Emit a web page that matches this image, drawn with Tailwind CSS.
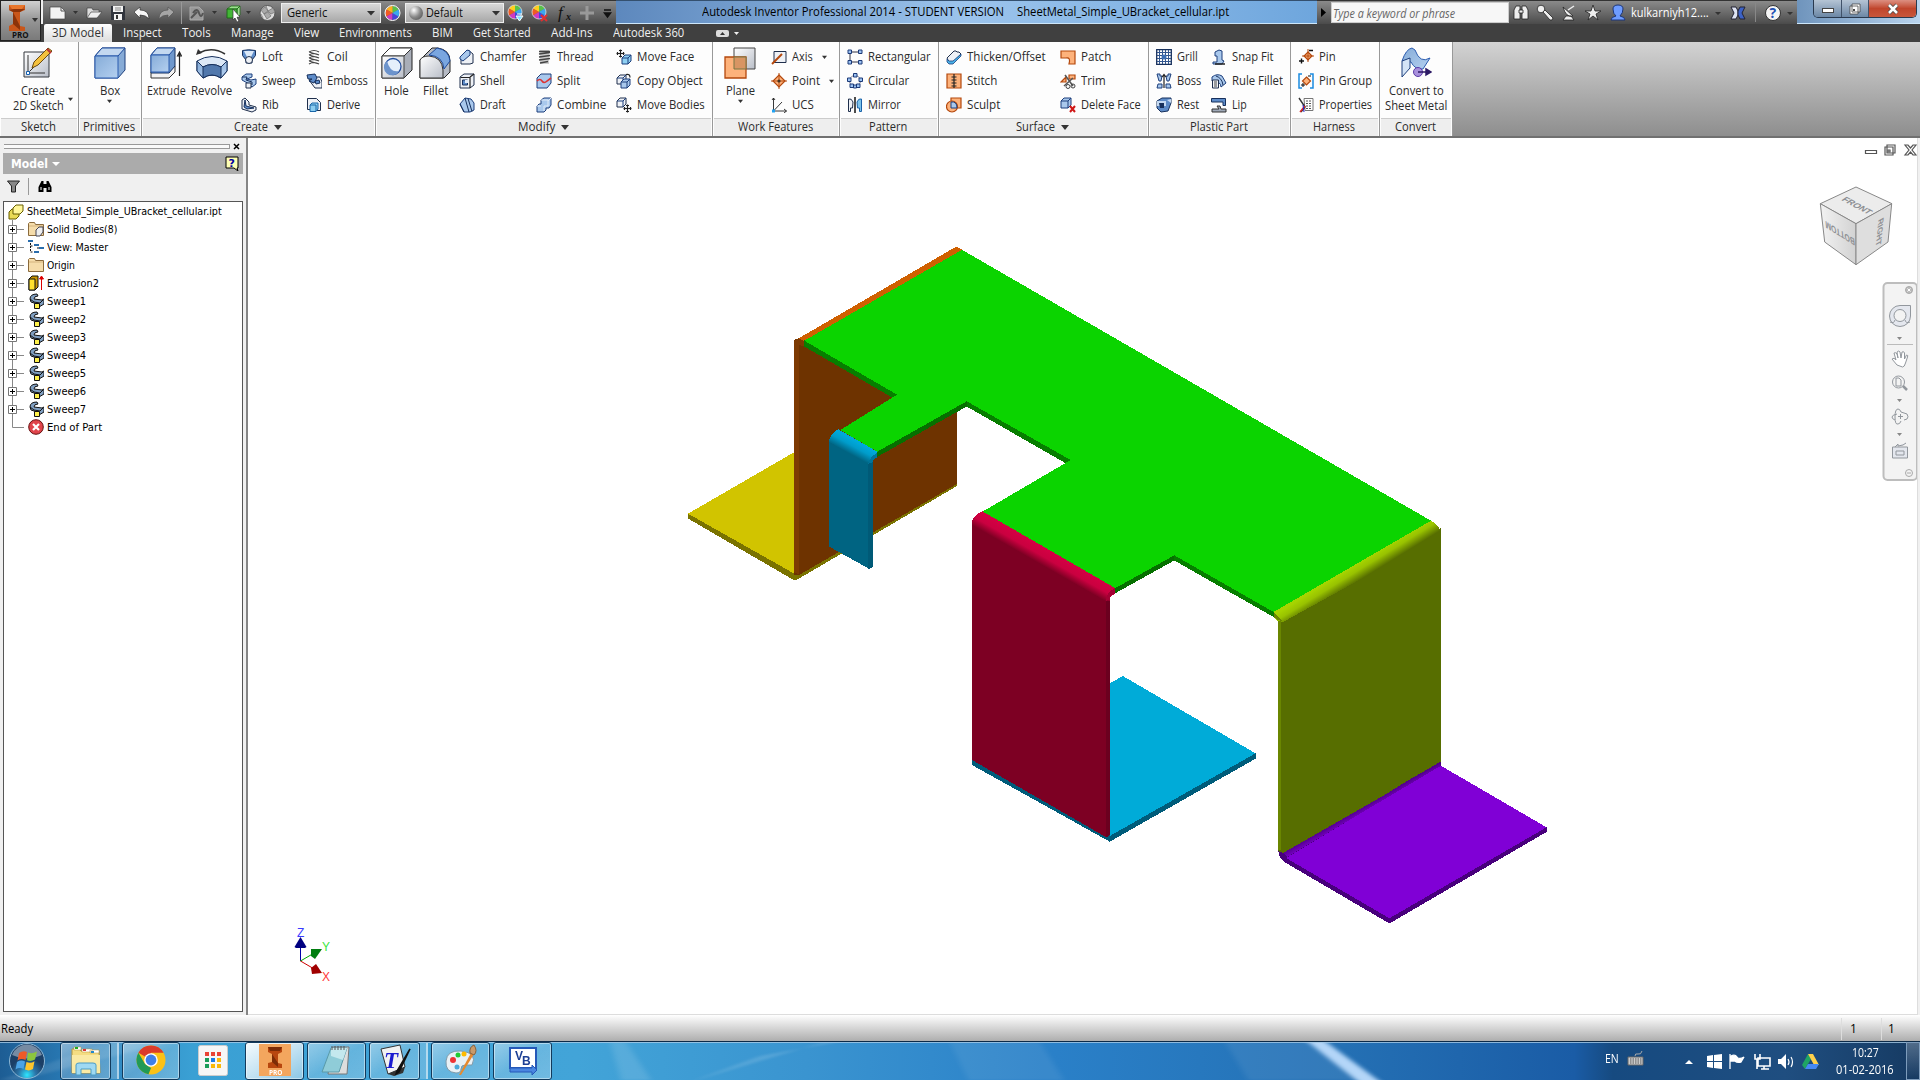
<!DOCTYPE html>
<html lang="en">
<head>
<meta charset="utf-8">
<title>Autodesk Inventor Professional 2014</title>
<script src="https://cdn.jsdelivr.net/npm/@tailwindcss/browser@4"></script>
</head>
<body class="w-[1920px] h-[1080px] overflow-hidden bg-[#f0f0f0] flex flex-col font-['Open_Sans','Noto_Sans',sans-serif] text-[12px] text-[#2b2b2b] leading-none">

<!-- Title bar and tabs -->
<header class="relative flex flex-col h-[42px] shrink-0">
  <div class="flex h-6 shrink-0">
    <div class="w-[43px] shrink-0"></div>
    <div class="flex items-center h-6 w-[573px] shrink-0 bg-linear-to-b from-[#8a8a8a] via-[#6b6b6b] to-[#4b4b4b] border-t border-[#333] pl-[5px]">
      <svg class="w-[240px] h-6 shrink-0" viewBox="48 0 240 24">
        <path d="M50 6h11l4 4v8H50z" fill="#f3f3f3" stroke="#444" stroke-width=".7"/><path d="M61 6v4h4" fill="none" stroke="#555"/>
        <path d="M73 10h5l-2.500 3zM212 10h5l-2.500 3zM246 10h5l-2.500 3z" fill="#333"/>
        <path d="M87 17V7h5l1 2h6v2" fill="#ddd" stroke="#444" stroke-width=".7"/><path d="M87 17l4-6h11l-5 6z" fill="#eee" stroke="#444" stroke-width=".7"/>
        <path d="M111 5h14v14h-14z" fill="#30343c"/><path d="M113 5h10v6h-10zM114 13h8v6h-8z" fill="#f2f2f2"/><path d="M115 7h6M115 9h6" stroke="#888"/><path d="M116 14h2v4h-2z" fill="#333"/>
        <path d="M134 11l6-5v3q9 0 9 9q-3-4-9-4v3z" fill="#f7f7f7" stroke="#333" stroke-width=".7"/>
        <path d="M174 11l-6-5v3q-9 0-9 9q3-4 9-4v3z" fill="#a5a5a5" stroke="#555" stroke-width=".7"/>
        <path d="M181.500 1v22" stroke="#999"/>
        <path d="M190 6h9l4 4v9h-13z" fill="#999" stroke="#aaa"/><path d="M193 12q4-6 6 0t4 0M191 17l6-6" stroke="#555" stroke-width="2" fill="none"/>
        <path d="M227 8l4-3h9l-3 3zM240 5v9l-3 3V8z" fill="#9be08e" stroke="#1f6a18" stroke-width=".8"/><path d="M227 8h10v9h-10z" fill="#43b636" stroke="#1f6a18"/><path d="M233 8l7 8-3 .3 2 4-2 .7-2-4-2 2z" fill="#fff" stroke="#333" stroke-width=".7"/>
        <circle cx="267.500" cy="12" r="7.500" fill="#ddd" stroke="#555"/><path d="M261 9l4-3 3 4-4 3zM268 10l5-3 2 4-4 2zM264 13l4-2 3 4-4 3zM261 13l2 4M266 5l2 5" fill="#aaa" stroke="#777" stroke-width=".8"/>
      </svg>
      <div class="flex items-center justify-between w-[100px] shrink-0 h-5 ml-[-7px] bg-linear-to-b from-[#d8d8d8] to-[#a8a8a8] border border-[#eee] px-[5px] text-[#111]"><span data-w="40">Generic</span><svg class="w-2 h-2" viewBox="0 0 8 8"><path d="M0 2h8L4 6.500z" fill="#333"/></svg></div>
      <svg class="w-[22px] h-5 shrink-0" viewBox="0 0 22 20"><g transform="translate(11.500 10)"><path d="M0 0V-7A7 7 0 0 1 6 -3.500z" fill="#58c14b"/><path d="M0 0V-7A7 7 0 0 0-6-3.500z" fill="#ffb01e"/><path d="M0 0L-6-3.500A7 7 0 0 0-6 3.500z" fill="#f25a22"/><path d="M0 0L-6 3.500A7 7 0 0 0 0 7z" fill="#d03ac0"/><path d="M0 0V7A7 7 0 0 0 6 3.500z" fill="#4444dc"/><path d="M0 0L6 3.500A7 7 0 0 0 6-3.500z" fill="#3ba7f0"/><circle r="7.500" fill="none" stroke="#fff"/></g></svg>
      <div class="flex items-center w-[99px] shrink-0 h-5 ml-[2px] bg-linear-to-b from-[#d8d8d8] to-[#a8a8a8] border border-[#eee] px-[3px] text-[#111]"><i class="w-[14px] h-[14px] rounded-full bg-radial-[at_35%_30%] from-white via-[#888] to-[#444]"></i><span class="ml-[3px]" data-w="37">Default</span><svg class="w-2 h-2 ml-auto" viewBox="0 0 8 8"><path d="M0 2h8L4 6.500z" fill="#333"/></svg></div>
      <svg class="w-[110px] h-6 shrink-0" viewBox="504 0 110 24">
        <g id="wheel"><path d="M515 11V4a7 7 0 0 1 6 3.500z" fill="#58c14b"/><path d="M515 11V4a7 7 0 0 0-6 3.500z" fill="#ffd01e"/><path d="M515 11l-6-3.500a7 7 0 0 0 0 7z" fill="#f25a22"/><path d="M515 11l-6 3.500a7 7 0 0 0 6 3.500z" fill="#d03ac0"/><path d="M515 11v7a7 7 0 0 0 6-3.500z" fill="#4444dc"/><path d="M515 11l6 3.500a7 7 0 0 0 0-7z" fill="#3ba7f0"/><circle cx="515" cy="11" r="7" fill="none" stroke="#ddd" stroke-width=".8"/></g>
        <use href="#wheel" x="24"/>
        <path d="M516 15h7l-3.500 5zM517 13h5" fill="#7fe0ff" stroke="#fff"/><path d="M541 14l6 6M547 14l-6 6" stroke="#e03030" stroke-width="2"/>
        <text x="558" y="17" font-size="17" font-style="italic" font-family="Liberation Serif, serif" fill="#111">f</text><text x="566" y="19" font-size="10" font-weight="bold" font-style="italic" font-family="Liberation Serif, serif" fill="#111">x</text>
        <path d="M587 5v14M580 12h14" stroke="#999" stroke-width="3"/><path d="M604 9h7M604.500 12h6l-3 4z" stroke="#111" stroke-width="1.500" fill="#111"/>
      </svg>
    </div>
    <div class="flex items-center h-6 w-[701px] shrink-0 bg-linear-to-r from-[#5d88bd] via-[#9cc4ec] to-[#6ea6dd] border-t border-b border-t-[#34506f] border-b-[#cde7fb] text-black whitespace-pre">
      <span class="ml-[86px]" data-w="302">Autodesk Inventor Professional 2014 - STUDENT VERSION</span><span class="ml-[13px]" data-w="212">SheetMetal_Simple_UBracket_cellular.ipt</span>
    </div>
    <div class="flex items-center h-6 w-[480px] shrink-0 bg-linear-to-b from-[#8a8a8a] via-[#6b6b6b] to-[#4b4b4b] border-t border-[#333]">
      <svg class="w-[14px] h-6 shrink-0" viewBox="0 0 14 24"><path d="M4 7l5 4.500-5 4.500z" fill="#000"/></svg>
      <div class="flex items-center w-[178px] shrink-0 h-[21px] bg-[#f7f7f7] border border-[#ccc] pl-px pt-[3px] italic text-[#666]"><span data-w="122">Type a keyword or phrase</span></div>
      <svg class="w-[122px] h-6 shrink-0" viewBox="1509 0 122 24">
        <g fill="#eee" stroke="#222" stroke-width=".8"><path d="M1514 18V9l2-4h4v13zM1522 18V5h4l2 4v9z"/><path d="M1519 9h4v3h-4z"/><circle cx="1541" cy="8" r="3.800"/><path d="M1543 11l2-2 8 8-1 2h-2z"/><path d="M1563 19h11l-3-4h-5zM1563 6l10 9q-7 2-10-9z"/><path d="M1568 9l6-4" stroke="#eee" stroke-width="1.500"/><path d="M1593 4l2 6h6l-5 3 2 6-5-4-5 4 2-6-5-3h6z"/></g>
        <path d="M1613 8q0-4 5-4t5 4-3 7q5 1 5 4h-14q0-3 5-4-3-2-3-7z" fill="#6e9cff" stroke="#1b357a"/>
      </svg>
      <span class="text-white pt-px" data-w="78">kulkarniyh12....</span>
      <svg class="w-[88px] h-6 shrink-0" viewBox="1709 0 88 24"><path d="M1715 11h6l-3 3zM1787 11h6l-3 3z" fill="#333"/><path d="M1731 6h5l2 4v4l-2 4h-5l3-6z" fill="#dfe4f3" stroke="#223"/><path d="M1745 6h-5l-2 4v4l2 4h5l-3-6z" fill="#3c62c6" stroke="#223"/><path d="M1755.500 2v19" stroke="#888"/><circle cx="1773" cy="12" r="7.500" fill="#f5f5f5" stroke="#333"/><text x="1769.500" y="17" font-size="14" font-weight="bold" font-family="Open Sans, sans-serif" fill="#1f51b4">?</text></svg>
    </div>
    <div class="relative flex h-6 w-[123px] shrink-0 bg-linear-to-r from-[#6f94bc] to-[#b9d4ee] border-b border-[#cde7fb] pl-4">
      <div class="flex h-[18px] w-[104px] rounded-b-[5px] border border-t-0 border-[#2a3a4f] overflow-hidden">
        <div class="flex w-7 shrink-0 items-center justify-center bg-linear-to-b from-[#b5c4d4] to-[#6c88a6] border-r border-[#405269]"><i class="w-3 h-[5px] mt-1 bg-white border border-[#444]"></i></div>
        <div class="flex w-[27px] shrink-0 items-center justify-center bg-linear-to-b from-[#b5c4d4] to-[#6c88a6] border-r border-[#405269]"><svg class="w-3 h-3" viewBox="0 0 12 12"><path d="M3 1h8v8H3zM1 3h8v8H1z" fill="#fff" stroke="#444" stroke-width=".8"/><path d="M4 6h2v2H4z" fill="#444"/></svg></div>
        <div class="flex w-[47px] shrink-0 items-center justify-center bg-linear-to-b from-[#dc8f81] via-[#c0452c] to-[#c8573c]"><svg class="w-3 h-3" viewBox="0 0 12 12"><path d="M2 2l8 8M10 2l-8 8" stroke="#444" stroke-width="4"/><path d="M2 2l8 8M10 2l-8 8" stroke="#fff" stroke-width="2.600"/></svg></div>
      </div>
    </div>
  </div>
  <nav class="flex h-[18px] bg-[#404040] text-[#f0f0f0] pl-11" id="tabs"></nav>
  <div class="absolute left-0 top-0 w-[41px] h-[41px] bg-linear-to-b from-[#d0d0d0] via-[#959595] to-[#7a7a7a] border border-[#222]">
    <svg class="w-full h-full" viewBox="1 1 39 39"><path d="M9 5h16v5l-5 2v14l5 1v4H9v-5l4-2V12L9 10z" fill="#c9561a"/><path d="M9 10l5-1h11l-5 3h-7zM13 12l7 14v4l-7-6z" fill="#8c3309"/><path d="M9 5h16l-3 4H12z" fill="#e8762c"/><path d="M32 18h6l-3 4z" fill="#333"/><text x="12" y="38" font-size="8" font-weight="bold" font-family="Open Sans, sans-serif" fill="#111">PRO</text></svg>
  </div>
</header>

<!-- Ribbon -->
<section class="flex h-[96px] shrink-0 bg-linear-to-b from-[#d3d3d3] to-[#8e8e8e] border-b-2 border-[#707070]" id="ribbon"></section>

<!-- Browser panel and canvas -->
<main class="flex h-[877px] shrink-0">
  <aside class="flex flex-col w-[248px] border-r-2 border-[#858585] pl-[3px] pr-[3px] pt-[3px] font-['DejaVu_Sans_Condensed','DejaVu_Sans',sans-serif] text-[11px] text-black">
    <div class="flex items-center h-[11px] justify-between pr-[3px]"><div class="w-[226px] h-[5px] border-t border-b border-r border-[#999] ml-px bg-[#fafafa]"></div><svg class="w-[7px] h-[7px]" viewBox="0 0 7 7"><path d="M1 1l5 5M6 1L1 6" stroke="#000" stroke-width="1.500"/></svg></div>
    <div class="flex items-center h-[21px] w-[240px] bg-[#ababab] mt-px px-2 text-white font-bold text-[12px]"><span data-w="37">Model</span><svg class="w-2 h-2 ml-1" viewBox="0 0 8 8"><path d="M0 2h8L4 6z" fill="#fff"/></svg>
      <svg class="w-[14px] h-[15px] ml-auto -mr-1" viewBox="0 0 14 15"><path d="M1 1h12v11h-1l1 3-4-3H1z" fill="#ffffb5" stroke="#000"/><text x="3.500" y="11" font-size="11" font-weight="bold" font-family="DejaVu Sans, sans-serif" fill="#0000a0">?</text></svg></div>
    <div class="flex items-center h-[23px] pl-1"><svg class="w-[50px] h-5" viewBox="0 0 50 20"><path d="M.5 5h12L8.500 10v6h-4v-6z" fill="#888" stroke="#222"/><path d="M21.500 2v17" stroke="#999"/><path d="M31.500 16V11l3-6h2v3h3V5h2l3 6v5h-5v-4h-3v4z" fill="#000"/><path d="M34 11v3M42 11v3" stroke="#fff"/></svg></div>
    <ul class="flex flex-col h-[811px] w-[240px] bg-white border border-[#555] mt-1" id="tree"></ul>
  </aside>
  <div class="relative w-[1670px] bg-white border-r border-b border-[#ddd]">
    <svg class="block w-[1669px] h-[876px]" viewBox="248 138 1669 876">
      <defs>
        <linearGradient id="gb" gradientUnits="userSpaceOnUse" x1="853" y1="440" x2="846.500" y2="452"><stop offset="0" stop-color="#00a8da"/><stop offset=".4" stop-color="#009cca"/><stop offset="1" stop-color="#006482"/></linearGradient>
        <linearGradient id="gr" gradientUnits="userSpaceOnUse" x1="1048" y1="550" x2="1040" y2="564"><stop offset="0" stop-color="#d40043"/><stop offset=".5" stop-color="#ca0040"/><stop offset="1" stop-color="#7d0023"/></linearGradient>
        <linearGradient id="gl" gradientUnits="userSpaceOnUse" x1="1352" y1="567" x2="1360" y2="580"><stop offset="0" stop-color="#a6d400"/><stop offset=".4" stop-color="#98c200"/><stop offset="1" stop-color="#576e00"/></linearGradient>
        <linearGradient id="gp" gradientUnits="userSpaceOnUse" x1="1360" y1="806" x2="1364" y2="813"><stop offset="0" stop-color="#46007a"/><stop offset="1" stop-color="#7400c0"/></linearGradient>
        <linearGradient id="gc" x1="0" y1="0" x2="1" y2="0"><stop offset="0" stop-color="#f2f2f2"/><stop offset="1" stop-color="#d2d2d2"/></linearGradient>
      </defs>
      <g shape-rendering="crispEdges">
        <path d="M688 513.700L794 452.300V580L688 518z" fill="#d1c400"/><path d="M688 513.700L794 573.500 957 480v6L797 579.700h-4L688 518.500z" fill="#7a7300"/>
        <path d="M797 339L957 390v94L799 575h-5V341z" fill="#6e3300"/><path d="M794 340l5-2 6 2.700-.5 6-5.500-2v230l-5-2.500z" fill="#7d3a02"/>
        <path d="M798.700 338.300L955 247.300h3l5 3L804.300 341z" fill="#cf6000"/>
        <path d="M804.300 340V346.500L893 398l4-4zM966.700 401V406.500L1066 463.500l5-4zM1174.300 555V560.500L1273.500 617v-6z" fill="#077e00"/><path d="M877 451V457L966.700 406.500V400zM1114 588V594L1174.300 560.500V554z" fill="#067000"/>
        <path d="M962 249.800L1431 520.700 1273.500 612 1174.300 555.300 1115 588.300 982.400 511.700 1070.700 460 966.700 401.300 877.300 451.700 840.300 430 897 394.700 804.300 340.700z" fill="#0bd400"/>
        <path d="M829.300 440L868 462l5-4v109l-4 1.700L829.300 546.700z" fill="#006482"/><path d="M868.300 463L873 458V566.500l-3 2h-1.700z" fill="#005a77"/>
        <path d="M829.300 440q2-7 9-10.700L877.300 451.700V458q-3-1-5 2.500l-4 4L829.300 442z" fill="url(#gb)"/><path d="M868.300 464q1-7 9-11v5q-4 0-4.300 4z" fill="#00749a"/>
        <path d="M1109.800 683.300L1122.900 676 1255.500 753.300V758.700L1109.800 841.700 972 765v-6z" fill="#005c7a"/><path d="M1109.800 683.300L1122.900 676 1255.500 753.300 1109.800 836z" fill="#00abd8"/>
        <path d="M972 523L1105.300 596l4.500 2V834l-4 3L972 760z" fill="#7d0023"/><path d="M1105.500 600l4.500-4v238l-3 3h-1.500z" fill="#6b001f"/>
        <path d="M972 525v-4q3-7 10.400-9.700L1115 588v6q-5 1-5.500 7h-4z" fill="url(#gr)"/><path d="M1105.500 601q1-9 9.500-13v5.500q-5 1-5 6z" fill="#a30033"/>
        <path d="M1278 850l5 2L1390 786l50.500-25v5L1546.500 827.300V832L1389.400 923.500 1286 863q-7-4-8-13z" fill="#48007c"/><path d="M1440.500 765.500L1546.500 827.300 1389.400 918.300 1286 858z" fill="#8000d6"/><path d="M1283 852L1440.400 761V766L1287 857z" fill="url(#gp)"/>
        <path d="M1278 619L1440.900 528V761.500L1402 784l-14 9-105 60-5-2z" fill="#576e00"/><path d="M1431 520.700q9 4 9.900 14.300L1283 622l-5-1-4.500-4v-5z" fill="url(#gl)"/><path d="M1273.500 612l9 9-4.500-1-4.500-3zM1278 621h2.500v229H1278z" fill="#6a8600"/>
      </g>
      <!-- Axis triad -->
      <path d="M300.500 961V945" stroke="#00a" stroke-width="1"/><path d="M300.500 937l6 10-1.500 1h-9l-1.500-1z" fill="#000080"/>
      <path d="M300.500 961l12-7" stroke="#0a0" stroke-width="1"/><path d="M311 949l11 0-7 10-4-3z" fill="#007d10"/><path d="M300.500 961l12 7" stroke="#c00" stroke-width="1"/><path d="M311 968l5-4 6 9-10 1z" fill="#a00000"/>
      <g font-family="Liberation Sans, sans-serif" font-size="12"><text x="297" y="937" fill="#3a3aff">Z</text><text x="322" y="951" fill="#3ce63c">Y</text><text x="322" y="981" fill="#ff3a3a">X</text></g>
      <!-- Document window buttons -->
      <g fill="#fff" stroke="#555" stroke-width="1.200"><path d="M1865.500 150.500h11v3h-11z"/><path d="M1887 145h8v8h-8zM1885 147h8v8h-8z"/><path d="M1888 150h2v2h-2z"/><path d="M1905 145h3l2.500 3 2.500-3h3l-4 5 4 5h-3l-2.500-3-2.500 3h-3l4-5z"/></g>
      <!-- View cube -->
      <g stroke="#888" stroke-width="1"><path d="M1856 187l36 16.700-36 20-35.700-20z" fill="#ececec"/><path d="M1820.300 203.700l35.700 20v41l-31.300-22.700z" fill="url(#gc)"/><path d="M1891.700 203.700l-35.700 20v41l32-22.700z" fill="#dedede"/></g>
      <g font-family="Liberation Sans, sans-serif" font-weight="bold" font-size="10" fill="#8d8f93"><text transform="matrix(.8 .43 -.75 .5 1841 200)" textLength="34" lengthAdjust="spacingAndGlyphs">FRONT</text><text transform="matrix(-.87 -.54 -.1 -1 1854.500 239)" textLength="34" lengthAdjust="spacingAndGlyphs">BOTTOM</text><text transform="matrix(-.1 1 -.85 .5 1878.500 220)" textLength="27" lengthAdjust="spacingAndGlyphs" font-size="9">RIGHT</text></g>
      <!-- Navigation bar -->
      <rect x="1883.500" y="283" width="33.500" height="197" rx="4" fill="#f3f3f3" stroke="#bdbdbd" stroke-width="2"/>
      <g fill="none" stroke="#92979d" stroke-width="1"><circle cx="1909" cy="290" r="3.500" fill="#bbb" stroke="#aaa"/><path d="M1907.500 288.500l3 3m0-3l-3 3" stroke="#fff"/><circle cx="1909" cy="473" r="3.500" stroke="#aaa"/><path d="M1907 473h4" stroke="#aaa"/>
        <path d="M1900 305.500h10.500V316a10.500 10.500 0 1 1-10.500-10.500z" fill="#e4e7ee"/><circle cx="1900" cy="315.500" r="6" fill="#f3f3f3"/><path d="M1890 322q4 2 5-2M1910 322q-4 2-5-2"/>
        <path d="M1887 344.500h26" stroke="#bbb"/><path d="M1897 365l-5-6q2-2 4 1l-2-7q2-1 3 1l1 4-1-6q2-2 3 0l1 6 1-6q2-1 2.500 1v6l2-4q2 0 1 2l-2 6q-1 4-3 4z" fill="#fff"/>
        <circle cx="1898.500" cy="382" r="6"/><path d="M1896 378h3l2 2v6h-5z"/><path d="M1903 386l4 4" stroke-width="2.500"/>
        <path d="M1901 412q-1-3-3-3-3 0-3 8t3 7q2 0 3-3M1895 420q-3-1-3-3t5-3M1901 412l6 2q2 3 0 5l-3 1M1898 416.500h5M1900.500 414v5"/>
        <path d="M1892.500 447h15v11h-15zM1895 447l3-3v2l5-1 3-2M1896 451h8v4h-8z" fill="#e4e7ee"/></g>
      <path d="M1897 337h5l-2.500 3zM1897 399h5l-2.500 3zM1897 433h5l-2.500 3z" fill="#888"/>
    </svg>
  </div>
</main>

<!-- Status bar -->
<footer class="flex items-center h-[26px] shrink-0 bg-linear-to-b from-white to-[#aeaeae] text-black pl-px pt-[2px]"><span data-w="32">Ready</span>
  <div class="flex ml-auto h-[22px] items-center"><div class="w-10 h-full flex items-center pl-2 border-l border-[#ddd]">1</div><div class="w-[39px] h-full flex items-center pl-[6px] border-l border-[#ddd]">1</div></div></footer>

<!-- Taskbar -->
<section class="relative flex items-center h-[39px] shrink-0 border-t border-[#0c2a48]">
  <svg class="absolute inset-0 w-full h-[38px]" viewBox="0 0 1920 38" preserveAspectRatio="none">
    <defs><linearGradient id="tb"><stop offset="0" stop-color="#1d5d94"/><stop offset=".04" stop-color="#2a7db8"/><stop offset=".1" stop-color="#3aa0d4"/><stop offset=".3" stop-color="#42a4d8"/><stop offset=".42" stop-color="#3a94d0"/><stop offset=".55" stop-color="#2a80c8"/><stop offset=".7" stop-color="#2470b4"/><stop offset=".82" stop-color="#1a5ca6"/><stop offset=".84" stop-color="#164a80"/><stop offset=".93" stop-color="#1f4e80"/><stop offset="1" stop-color="#163a62"/></linearGradient><filter id="soft" x="-50%" width="200%"><feGaussianBlur stdDeviation="3 1"/></filter></defs>
    <path d="M0 0h1920v38H0z" fill="url(#tb)"/>
    <g filter="url(#soft)"><path d="M1304 -3h18l60 44h-22z" fill="#b4d6f8"/><path d="M610 0h16l25 38h-30z" fill="#fff" opacity=".12"/><path d="M690 40l140-42h18L760 14z" fill="#fff" opacity=".14"/><path d="M950 0h90l24 38h-96z" fill="#fff" opacity=".07"/><path d="M1225 0h80l55 38h-112z" fill="#fff" opacity=".07"/><path d="M0 38L110 0h60L20 38z" fill="#fff" opacity=".1"/></g>
    <path d="M0 .5h1920" stroke="#a8cbe6" opacity=".8"/>
  </svg>
  <div class="relative flex items-center w-full h-full" id="tasks"></div>
</section>

<script>
const svg = (inner, cls = 'w-4 h-4', vb = '0 0 16 16') => `<svg class="${cls} shrink-0" viewBox="${vb}">${inner}</svg>`;
const B = 'fill="#a9c8ec" stroke="#1d3f7c" stroke-width="1"', W = 'fill="#eef1f6" stroke="#1f2f4c" stroke-width="1"', D = 'fill="#5d8bc8" stroke="#17305c" stroke-width="1"', O = 'fill="#fdb27b" stroke="#b4480d" stroke-width="1.200"', K = 'fill="none" stroke="#222" stroke-width="1.200"';
const move = (x, y) => `<path d="M${x} ${y - 4}v8M${x - 4} ${y}h8M${x - 1.500} ${y - 3}h3M${x - 1.500} ${y + 3}h3M${x - 3} ${y - 1.500}v3M${x + 3} ${y - 1.500}v3" ${K}/>`;
const cube = (x, y, s, st) => `<path d="M${x} ${y + 3}l3-3h${s}v${s}l-3 3h-${s}z" ${st}/><path d="M${x} ${y + 3}h${s}v${s}M${x + s} ${y + 3}l3-3" fill="none" stroke="#1d3f7c"/>`;
const ic = {
  loft: `<path d="M1.500 1.500q6-1.500 13 0v5L11 11v3H5v-3L1.500 6.500z" ${D}/><path d="M3 2h10l-3 6H6z" fill="#dce9f8"/><circle cx="8" cy="11" r="3.500" ${W}/>`,
  sweep: `<path d="M1 4l4-3h6v3L6 6l4 1 5-1v5l-4 3-3-3-7-4z" ${B}/><path d="M1 4h5l-1 3 6 2v3" fill="none" stroke="#17305c"/><path d="M5 10h5v5H5z" ${W}/>`,
  rib: `<path d="M1 3l3-2 4 4v3l7 2v3l-4 2-10-3z" ${W}/><path d="M4 3l1 6 8 2-7 1-3-2z" ${D}/>`,
  coil: `<path d="M3 3q5-3 10 0M3 6q5-3 10 0M3 9q5-3 10 0M3 12q5-3 10 0M3 15q5-3 10 0M3 3l10 3M3 6l10 3M3 9l10 3M3 12l10 3" fill="none" stroke="#444" stroke-width="1.200"/>`,
  emboss: `<path d="M3 7l6-3h5l2 5v6H9z" ${W}/><path d="M1 2l8-1 2 4-3 5-5-2 3-2-4 0zM9 8l4-1 1 3-4 1z" ${D}/>`,
  derive: `<path d="M1.500 1.500h9l4 4v8h-4v-6H5v5H1.500z" ${W}/><path d="M4 8l2-2h6v6l-2 2.500H4zM4 8h6v6" fill="#8ccdf0" stroke="#1a66a8"/>`,
  chamfer: `<path d="M2 8l7-7 5 4v9l-3 1H2z" ${W}/><path d="M1 8l7-7 3 1v4l-7 6-3-2z" ${B}/>`,
  shell: `<path d="M1 4l4-3h10v11l-4 3H1z" ${W}/><path d="M1.500 4.500h9.500V15M11 4l4-3" ${K}/><path d="M3.500 7h5v5h-5z" ${D}/><path d="M6 7h3v3H6z" fill="#dfeaf8"/>`,
  draft: `<path d="M1 7l5-6 6 1 3 4v7l-4 2H5z" ${B}/><path d="M6 1l4 14M9 1.500l4 13" stroke="#17305c" fill="none"/><path d="M1 7l4 8" stroke="#17305c"/>`,
  thread: `<path d="M4 1h9v14H4z" fill="#ccc"/><path d="M3 2.500h11M3 5l11-1.500M3 8l11-1.500M3 11l11-1.500M4 14l8-1.500" stroke="#444" stroke-width="1.300"/>`,
  split: `<path d="M1 5l4-4h10v9l-4 5H1z" ${B}/><path d="M1 8q3-3 5 0t5 0l4-3" stroke="#d33" stroke-width="1.600" fill="none"/>`,
  combine: `<path d="M5 3l3-2h7v7l-2 3h-3v2l-2 2H1V9l2-2h2z" ${B}/><path d="M5 3h7v6H8v5M1 9h4M12 4l3-3" fill="none" stroke="#dfeaf8"/>`,
  moveface: cube(6, 6, 6, 'fill="#8fd0f2" stroke="#1d3f7c"') + move(4.500, 4.500),
  copyobj: cube(1, 2, 6, W) + cube(5, 6, 6, B) + `<path d="M10 1.500q4-1 4 3" ${K}/>`,
  movebod: cube(1, 1, 6, W) + move(11.500, 11.500),
  axis: `<path d="M3 2.500h12v11H3z" ${W}/><path d="M1 15L11 5" stroke="#b4480d" stroke-width="2"/>`,
  point: `<path d="M8 2l6 6-6 6-6-6z" ${O}/><path d="M8 0v16M0 8h16" stroke="#b4480d"/><circle cx="8" cy="8" r="1.600" fill="#432"/>`,
  ucs: `<path d="M2.500 1v13h13M2.500 14L11 5M1 3l1.500-2L4 3M13 12l2.500 2-2.500 2" fill="none" stroke="#222" stroke-width=".9"/><path d="M1 12.500h3v3H1z" fill="#22a2f2"/>`,
  rect: `<path d="M3 3h10M3 3v10h10" fill="none" stroke="#334"/><g fill="#9cc2f2" stroke="#1c3a78"><path d="M1 1h3.500v3.500H1zM11.500 1H15v3.500h-3.500zM1 11.500h3.500V15H1zM11.500 11.500H15V15h-3.500z"/></g>`,
  circ: `<circle cx="8" cy="8" r="5.500" fill="none" stroke="#889"/><g fill="#9cc2f2" stroke="#1c3a78"><path d="M6.500.5h3.500V4H6.500zM.5 5H4v3.500H.5zM12 5h3.500v3.500H12zM3 11h3.500v3.500H3zM9.500 11H13v3.500H9.500zM6.500 12h3v3h-3z"/></g>`,
  mirror: `<path d="M8 0v16" stroke="#111" stroke-width="1.500"/><path d="M1.500 14.500V2q3-1 4.500 3l-.5 6-2 0v3.500z" ${W}/><path d="M14.500 14.500V2q-3-1-4.500 3l.5 6 2 0v3.500z" fill="#7cc3ec" stroke="#1b62a8"/>`,
  thicken: `<path d="M1 9l7-7h2l1 1h2l2 2-8 8H3z" ${W}/><path d="M1 10v3l2 2h4l8-8V5l-8 7H3z" fill="#49b2e8" stroke="#1d3f7c" stroke-width=".8"/>`,
  stitch: `<path d="M1 1h14v14H1z" ${O}/><path d="M8 1v14M5.500 4h5M5.500 7h5M5.500 10h5M5.500 13h5" stroke="#222" stroke-width="1.200"/>`,
  sculpt: `<path d="M5 1h10v10H5z" ${O}/><circle cx="6" cy="9.500" r="5.500" ${O}/><path d="M5 5q6-1 6 6H5z" ${B}/>`,
  patch: `<path d="M1 2h14v13h-6q2-7-3-6H1z" ${O}/>`,
  trim: `<path d="M1 9l5-5v5zM9 2h6v4H9z" ${O}/><path d="M5 2l8 11M13 5L4 13" stroke="#555" stroke-width="1.500"/><circle cx="13" cy="13" r="2" fill="none" stroke="#444"/><circle cx="8" cy="13.500" r="2" fill="none" stroke="#444"/>`,
  delface: cube(1, 1, 7, B) + `<path d="M10 9l5 6M15 9l-5 6" stroke="#d01818" stroke-width="2"/>`,
  grill: `<path d="M.7.700h14.600v14.600H.7z" fill="#fff" stroke="#17305c" stroke-width="1.300"/><path d="M3.500 1v14M6.500 1v14M9.500 1v14M12.500 1v14M1 3.500h14M1 6.500h14M1 9.500h14M1 12.500h14" stroke="#32568e" stroke-width="1"/><circle cx="8" cy="8" r="2.500" fill="#3d6fb4"/>`,
  boss: `<path d="M1 1h3v2h2l-1 5H3zM15 1h-3v2h-2l1 5h2zM2 11h4v4H1zM10 11h4l1 4h-5z" ${B}/><path d="M8 15V2M6 4l2-2.500L10 4" ${K}/>`,
  rest: `<path d="M1 4l5-3h9v5l-3 8-7 1-4-4z" ${D}/><path d="M1 4h9v5H1zM11 3l4-1v4z" fill="#c5daf2"/><path d="M3 6h5v5H4z" fill="#17305c"/>`,
  snap: `<path d="M4 3l4-2 3 1v9l2 1-2 3H2v-2h4V7H4z" ${B}/><path d="M4 15h10" stroke="#222" stroke-width="1.500"/>`,
  rule: `<path d="M1 4q5-4 10-1l4 7-5 4q0-6-9-6z" ${B}/><path d="M5 3q6 2 7 9" fill="none" stroke="#17305c"/><path d="M1.500 7h6v8h-6z" ${W}/><path d="M3 9h3M3 11h3M3 13h3" stroke="#444"/>`,
  lip: `<path d="M.5 1.500h14v7h-2.500V5H.5z" ${D}/><path d="M5 15h10v-3h-5l-1-3H6l2 3H1v3z" fill="#9fa9b8" stroke="#333"/>`,
  pin: `<path d="M10 3l4 4-4 4-4-4z" ${O}/><path d="M10 0v13M4 7h12" stroke="#b4480d"/><path d="M1 12h5M3.500 9.500v5M11 1.500h4" stroke="#111" stroke-width="1.400"/>`,
  pingroup: `<path d="M4 1H1v14h3M12 1h3v14h-3" fill="none" stroke="#1a8be0" stroke-width="1.500"/><path d="M8.500 4l4 4-4 4-4-4z" ${O}/><path d="M3 12h4M5 10v4M10 3h3" stroke="#111"/>`,
  props: `<path d="M6 1.500h9v12H7z" fill="#fff" stroke="#777"/><path d="M8 4h6M8 6.500h6M8 9h6M8 11.500h6" stroke="#555" stroke-dasharray="2 1"/><path d="M1 1l6 9-4 5" stroke="#333" stroke-width="1.400" fill="none"/><path d="M7 9l-5 6" stroke="#d22" stroke-width="1.500"/><path d="M5 8l1 7" stroke="#22c"/>`
};
const G = '<defs><linearGradient id="g1" x2="1" y2="1"><stop stop-color="#86acd8"/><stop offset="1" stop-color="#b4d0f0"/></linearGradient><linearGradient id="g2" x2="1" y2="1"><stop stop-color="#fff"/><stop offset="1" stop-color="#b9bec8"/></linearGradient></defs>';
const big = {
  sketch: G + `<path d="M2 5h25v25H2z" fill="url(#g2)" stroke="#33363c"/><path d="M6 8v18h17M6 26L17 15" fill="none" stroke="#333"/><path d="M4.500 24.500h3v3h-3z" fill="#fff" stroke="#1560b0"/><path d="M10 21l2-6L26 1l4 3-14 14z" fill="#f4c13d" stroke="#6a4a12"/><path d="M25 2l4 4" stroke="#b33" stroke-width="2"/>`,
  box: `<path d="M1 9l7-8h23v22l-7 8H1z" fill="#87abd6" stroke="#1d3f7c"/><path d="M1 9l7-8h23l-7 8z" fill="#c3d8f0" stroke="#1d4a9c"/><path d="M1 9h23v22H1z" fill="url(#g1)" stroke="#2b5cb0"/>`,
  extrude: `<path d="M1 25l6-6h18v6l-6 6H1z" fill="#f2f2f2" stroke="#333"/><path d="M1 8l6-7h18v18l-6 7H1z" fill="#6f98cc" stroke="#17305c"/><path d="M1 8l6-7h18l-6 7z" fill="#c3d8f0" stroke="#1d4a9c"/><path d="M1 8h18v17H1z" fill="url(#g1)" stroke="#2b5cb0"/><path d="M29.500 29V6M27.500 9l2-4 2 4z" ${K}/>`,
  revolve: `<path d="M3 6q13-7 26 1" fill="none" stroke="#333" stroke-width="1.600"/><path d="M0 8l2-6 4 4z" fill="#333"/><path d="M1 14q15-9 30 0v10l-6 7q-9-6-18 0l-6-7z" fill="#dce8f6" stroke="#17305c"/><path d="M1 14l6 6q9-5 18 0l6-6v10l-6 7q-9-6-18 0l-6-7z" fill="url(#g1)" stroke="#17305c"/><path d="M7 20q9-5 18 0v11q-9-6-18 0z" fill="#5178ac" stroke="#17305c"/>`,
  hole: `<path d="M1 9l8-8h22v22l-8 8H1z" fill="#a9aeb8" stroke="#222"/><path d="M1 9l8-8h22l-8 8z" fill="#fff" stroke="#333"/><path d="M1 9h22v22H1z" fill="url(#g2)" stroke="#444"/><circle cx="12" cy="19.500" r="8" fill="#e5effb" stroke="#2450a0" stroke-width="1.300"/><path d="M6 14a8 8 0 1 0 12 10q-9 2-12-10z" fill="#6d94cc"/>`,
  fillet: `<path d="M1 31V13L13 1h6q12 2 12 13v11l-6 6z" fill="#b5bac4" stroke="#222"/><path d="M1 31V13q2-4 9-4 13 1 14 14v8z" fill="url(#g2)" stroke="#333"/><path d="M10 8l8-7q12 2 13 13l-6 8Q24 9 10 8z" fill="#7aa6e0" stroke="#1d4a9c"/>`,
  plane: `<path d="M10 1h21v21H10z" fill="url(#g2)" stroke="#444"/><path d="M1 10h21v21H1z" fill="#fdb27b" stroke="#b4480d" stroke-width="1.300"/><path d="M10 10h12v12H10z" fill="#d89563" stroke="#774"/>`,
  convert: `<path d="M2 14q4-12 10-13l3 2q5 14 15 8l-7 11q-8 1-12-7z" fill="url(#g1)" stroke="#2b5cb0"/><path d="M2 14l8-3v10l-8 9z" fill="#d4e4f6" stroke="#1d3f7c"/><circle cx="18" cy="25" r="4.500" fill="#a890dc" stroke="#5a3aa8"/><path d="M18 25h9M26 22l5 3-5 3z" fill="#2d1a66" stroke="#2d1a66" stroke-width="1.500"/>`
};
const arrow = cls => `<svg class="${cls}" viewBox="0 0 8 6"><path d="M0 1h8L4 6z" fill="#333"/></svg>`;
const panels = [
  {t:'Sketch',tw:35,w:79,c:[{b:'sketch',w:76,l:[['Create',34],['2D Sketch',51]],side:1}]},
  {t:'Primitives',tw:52,w:63,c:[{b:'box',w:61,l:[['Box',20]],down:1}]},
  {t:'Create',tw:34,w:234,m:1,p:0,c:[{b:'extrude',w:48,l:[['Extrude',39]]},{b:'revolve',w:43,l:[['Revolve',41]]},{ml:8,w:65,r:[['loft','Loft',21],['sweep','Sweep',34],['rib','Rib',17]]},{w:65,r:[['coil','Coil',21],['emboss','Emboss',41],['derive','Derive',33]]}]},
  {t:'Modify',tw:37,w:337,m:1,p:0,c:[{b:'hole',w:41,l:[['Hole',25]]},{b:'fillet',w:36,l:[['Fillet',25]]},{ml:6,w:77,r:[['chamfer','Chamfer',46],['shell','Shell',25],['draft','Draft',26]]},{w:80,r:[['thread','Thread',37],['split','Split',23],['combine','Combine',49]]},{w:90,r:[['moveface','Move Face',57],['copyobj','Copy Object',66],['movebod','Move Bodies',68]]}]},
  {t:'Work Features',tw:75,w:127,p:0,c:[{b:'plane',w:54,l:[['Plane',29]],down:1},{ml:4,w:66,r:[['axis','Axis',21,8],['point','Point',28,8],['ucs','UCS',22]]}]},
  {t:'Pattern',tw:38,w:99,p:7,c:[{w:90,r:[['rect','Rectangular',63],['circ','Circular',41],['mirror','Mirror',33]]}]},
  {t:'Surface',tw:39,w:210,m:1,p:7,c:[{w:114,r:[['thicken','Thicken/Offset',79],['stitch','Stitch',30],['sculpt','Sculpt',33]]},{w:85,r:[['patch','Patch',30],['trim','Trim',25],['delface','Delete Face',60]]}]},
  {t:'Plastic Part',tw:58,w:142,p:7,c:[{w:55,r:[['grill','Grill',21],['boss','Boss',24],['rest','Rest',22]]},{w:75,r:[['snap','Snap Fit',42],['rule','Rule Fillet',51],['lip','Lip',15]]}]},
  {t:'Harness',tw:42,w:89,p:7,c:[{w:80,r:[['pin','Pin',17],['pingroup','Pin Group',53],['props','Properties',53]]}]},
  {t:'Convert',tw:41,w:73,c:[{b:'convert',w:72,l:[['Convert to',55],['Sheet Metal',62]]}]}
];
const tx = (s, w) => `<span data-w="${w}">${s}</span>`;
const col = c => c.b
  ? `<div class="relative flex flex-col items-center pt-[5px]" style="width:${c.w}px">${svg(big[c.b], 'w-8 h-8', '0 0 32 32')}<div class="flex flex-col items-center pt-1">${c.l.map(x => `<div class="h-[15px] flex items-center">${tx(...x)}</div>`).join('')}</div>${c.down ? arrow('w-[5px] h-1 mt-px') : ''}${c.side ? arrow('absolute w-[5px] h-1 right-[3px] bottom-[17px]') : ''}</div>`
  : `<div class="flex flex-col pt-[3px]" style="width:${c.w}px;margin-left:${c.ml || 0}px">${c.r.map(r => `<div class="flex items-center h-6 gap-[5px]">${svg(ic[r[0]])}${tx(r[1], r[2])}${r[3] ? `<div class="pl-1">${arrow('w-[5px] h-1')}</div>` : ''}</div>`).join('')}</div>`;
document.getElementById('ribbon').innerHTML = panels.map(p => `<div class="flex flex-col h-[94px] bg-[#fdfdfd] border-r border-[#999] shrink-0" style="width:${p.w}px"><div class="flex h-[76px]" style="padding-left:${p.p || 0}px">${p.c.map(col).join('')}</div><div class="flex items-center justify-center h-[18px] bg-[#eee] border-t border-[#ccc] mx-px pr-[2px] pb-[2px] gap-[6px]">${tx(p.t, p.tw)}${p.m ? arrow('w-2 h-[6px]') : ''}</div></div>`).join('');

document.getElementById('tabs').innerHTML = [['3D Model',52,68],['Inspect',39,61],['Tools',29,47],['Manage',43,65],['View',25,43],['Environments',73,95],['BIM',21,39],['Get Started',58,80],['Add-Ins',42,60],['Autodesk 360',71,92]]
  .map((t, i) => `<div class="flex items-center justify-center shrink-0 ${i ? '' : 'bg-linear-to-b from-white to-[#dcdcdc] text-[#333] rounded-t-[2px]'}" style="width:${t[2]}px">${tx(t[0], t[1])}</div>`).join('')
  + `<svg class="w-8 h-[18px] ml-[18px]" viewBox="0 0 32 18"><rect x="4" y="6" width="13" height="7" rx="2" fill="#ddd"/><path d="M8 11h5l-2.500-3z" fill="#333"/><path d="M22 8h5l-2.500 3z" fill="#eee"/></svg>`;

const tsweep = `<path d="M2 6q0-5 7-5l1 2q-4 0-4 3l8 1 2-1v5l-5 3-2-3-6-2z" fill="#7f9ec0" stroke="#111"/><path d="M2 6l4 3 6 1 3-3" fill="none" stroke="#111"/><path d="M6.500 10.500h5v5h-5z" fill="#fff14a" stroke="#111"/>`;
const folder = `<path d="M.5 14.500v-12l1-1h5l1 2h8v11z" fill="#f5dcaa" stroke="#8a6a3c"/><path d="M1 5h14" stroke="#d4b47e"/>`;
const tree = [['Solid Bodies(8)',70,folder + '<path d="M8 9l3-3h4v5l-3 4H8z" fill="#eee" stroke="#445"/>'],['View: Master',61,'<path d="M0 1h5v2H0zM6 5h5v2H6zM6 12h5v2H6zM11 8h5v2h-5z" fill="#2a6dad"/><path d="M2.500 4v9h3M2.500 7h3M9 9h3" stroke="#111" fill="none" stroke-dasharray="2 1"/>'],['Origin',28,folder],['Extrusion2',52,'<path d="M1 4l3-3h6v11l-3 3H1z" fill="#c79400" stroke="#111"/><path d="M1 4h6v11H1z" fill="#ffe12e" stroke="#111"/><path d="M13.500 15V2M11.500 4l2-3 2 3z" fill="#d00" stroke="#d00"/>'],
  ...[1,2,3,4,5,6,7].map(n => ['Sweep' + n, 39, tsweep]), ['End of Part',55,'<circle cx="8" cy="8" r="7.300" fill="#e0444b" stroke="#611"/><path d="M5 5l6 6M11 5l-6 6" stroke="#fff" stroke-width="2.200"/>']];
document.getElementById('tree').innerHTML = `<li class="flex items-center h-[18px] pl-1 gap-[3px] pt-px">${svg('<path d="M1 8l3-3h7v7l-3 3H1z" fill="#e9da55" stroke="#665c00"/><path d="M5 4l3-3h7v6l-3 3H5z" fill="#fff79a" stroke="#665c00"/>')}${tx('SheetMetal_Simple_UBracket_cellular.ipt', 195)}</li>`
  + tree.map((t, i) => `<li class="flex items-center h-[18px]">${svg((i < tree.length - 1 ? '<path d="M8.500 0v18M9 9.500h11" stroke="#888" fill="none"/><path d="M4.500 5.500h8v8h-8z" fill="#fff" stroke="#777"/><path d="M6 9.500h5M8.500 7v5" stroke="#000"/>' : '<path d="M8.500 0v9.500H20" stroke="#888" fill="none"/>'), 'w-6 h-[18px]', '0 0 24 18')}${svg(t[2])}<span class="ml-[3px]" data-w="${t[1]}">${t[0]}</span></li>`).join('');

const btn = (w, ml, inner, active) => `<div class="flex items-center justify-center h-[38px] rounded-[3px] border border-[#123a5c] pb-[2px] shadow-[inset_0_0_0_1px_rgba(255,255,255,0.45)] shrink-0 ${active ? 'bg-linear-to-br from-white/95 via-white/70 to-white/40' : 'bg-linear-to-br from-white/45 via-white/20 to-white/25'}" style="width:${w}px;margin-left:${ml}px">${svg(inner, 'w-8 h-8', '0 0 32 32')}</div>`;
const stack = '<div class="w-2 h-[36px] border-r-2 border-white/50 bg-white/20"></div>';
document.getElementById('tasks').innerHTML =
  svg('<defs><radialGradient id="orb" cy=".9"><stop stop-color="#2ee6ff"/><stop offset=".5" stop-color="#2a74a8"/><stop offset="1" stop-color="#1c3f66"/></radialGradient></defs><circle cx="18" cy="18" r="17.500" fill="url(#orb)" stroke="#8fb8d6"/><path d="M3 12a16 16 0 0 1 30 0q-15 7-30 0z" fill="#fff" opacity=".4"/><path d="M10 10q4-3 8-1l-1.500 8q-4-2-8 .5z" fill="#ee5a28"/><path d="M19 9.500q4 2 9-1l-2 8q-4 2.500-8 .8z" fill="#8cc63e"/><path d="M8 19q4-2.500 8-.5L14.500 26q-4-2-8 .5z" fill="#4aa3e6"/><path d="M17.500 19q4 2 8-.8L24 26q-4 2.500-8 .6z" fill="#fdc52c"/>', 'w-9 h-9 ml-[9px]', '0 0 36 36')
  + btn(51, 15, '<path d="M2 5h8l1 2h18l1 22H2z" fill="#f4dd82" stroke="#b8973a"/><path d="M4 3h7v3H4zM12 5h10v3H12zM20 6h9v3h-9z" fill="#fff" stroke="#b8973a" stroke-width=".5"/><path d="M5 3h3v2H5z" fill="#2a2"/><path d="M13 5h3v2h-3z" fill="#d33"/><path d="M21 7h3v2h-3z" fill="#28c"/><path d="M2 11h28v18H2z" fill="#faeaa4"/><path d="M6 31V21q0-2 3-2h14q3 0 3 2v10h-5v-6H11v6z" fill="#9ed9f2" stroke="#4a9cc4"/>') + stack
  + btn(58, 3, '<circle cx="16" cy="16" r="14.500" fill="#fbc117"/><path d="M16 16L3.400 8.700A14.500 14.500 0 0 1 28.600 8.700H16z" fill="#db3b2b"/><path d="M3.400 8.700L10 20l6 4-2.500 6.300A14.500 14.500 0 0 1 3.400 8.700z" fill="#219a55"/><circle cx="16" cy="16" r="6.800" fill="#fff"/><circle cx="16" cy="16" r="5.400" fill="#3f7fe8"/>')
  + svg('<rect x=".5" y=".5" width="29" height="30" rx="2" fill="#f6f6f6" stroke="#ccc"/><path d="M7 7h4v4H7zM13 7h4v4h-4zM19 7h4v4h-4z" fill="#e94335"/><path d="M7 13h4v4H7zM7 19h4v4H7z" fill="#1a9d59"/><path d="M13 13h4v4h-4z" fill="#1a7be8"/><path d="M19 13h4v4h-4zM13 19h4v4h-4zM19 19h4v4h-4z" fill="#f9b90a"/>', 'w-[30px] h-[31px] ml-[18px] -mt-[2px]', '0 0 30 31')
  + btn(59, 17, '<path d="M0 0h32v32H0z" fill="#f3a65e"/><path d="M9 3h14v5l-4 2v9l4 1v4H9v-5l4-1v-8l-4-2z" fill="#b8460e"/><path d="M9 3h14l-2 4H11zM13 10l6 9v4l-6-5z" fill="#7c2c06"/><text x="10" y="31" font-size="6.500" font-weight="bold" font-family="Open Sans, sans-serif" fill="#fff">PRO</text>', 1)
  + btn(59, 3, '<path d="M12 3h16l-2 27H7z" fill="#ddd" stroke="#777"/><path d="M10 4h16L18 28H1z" fill="#8fccd8" stroke="#5a99a8"/><path d="M10 4h16l-4 12-12-4z" fill="#c4e8ee"/><path d="M11 2v4M14 2v4M17 2v4M20 2v4M23 2v4" stroke="#555"/>')
  + btn(51, 3, '<path d="M2 5l19-4 5 22-17 7z" fill="#f2f2f2" stroke="#333"/><path d="M9 30l17-7-2 6-9 3z" fill="#333"/><text x="5" y="24" font-size="23" font-weight="bold" font-style="italic" font-family="Liberation Serif, serif" fill="#1a1ad0">T</text><path d="M31 5L18 27l-1 3 3-2z" fill="#111" stroke="#111" stroke-width="1.500"/>') + stack
  + btn(59, 3, '<path d="M16 7Q2 6 1 17t10 12q5 0 5-4t4-4 7 0Q33 9 16 7z" fill="#e9f1f6" stroke="#7e99a8"/><circle cx="8" cy="16" r="3" fill="#e33"/><circle cx="12" cy="23" r="2.500" fill="#4aa9d8"/><circle cx="13" cy="11" r="2.500" fill="#2c3"/><circle cx="19" cy="10" r="2.500" fill="#fb0"/><path d="M14 31L26 9l3 1-13 21z" fill="#e78a2e"/><path d="M25 9q-1-6 4-8 4 6 0 10z" fill="#c89a6a" stroke="#85603a"/>')
  + btn(59, 3, '<path d="M3 4h26v20H3z" fill="#fff" stroke="#2458b8" stroke-width="2"/><text x="8" y="16" font-size="12" font-weight="bold" font-family="Liberation Sans, sans-serif" fill="#1c3f94">V</text><text x="15" y="21" font-size="12" font-weight="bold" font-family="Liberation Sans, sans-serif" fill="#1c3f94">B</text><path d="M3 24h22v-3l5 5-5 5v-3H3z" fill="#4a86e0" stroke="#2458b8"/>')
  + `<div class="flex items-center ml-auto text-white h-full"><span class="-mt-[5px]" data-w="14">EN</span>`
  + svg('<path d="M1 7h15v8H1z" fill="#ccc" stroke="#666"/><path d="M3 9h12M3 11h12M3 13h12" stroke="#555" stroke-dasharray="1.500 1"/><path d="M8 6q0-3 3-2t4-3" fill="none" stroke="#aaa"/>', 'w-[17px] h-4 ml-2 -mt-[6px]', '0 0 17 16')
  + svg('<path d="M4 12h8L8 8z" fill="#fff"/><path d="M26 4l6-1v6h-6zM33 3l8-1v7h-8zM26 10h6v6l-6-1zM33 10h8v7l-8-1z" fill="#fff"/><path d="M49 2v15M50 4q4-2 6 1t7 0l-3 5q-4 1-6-1h-4z" fill="#fff" stroke="#fff" stroke-width="1.300"/><path d="M77 6h12v8H77zM80 17h8M83 14v3M74 2v5h5V2M76 7v10" fill="none" stroke="#fff" stroke-width="1.600"/><path d="M97 7h3l5-5v15l-5-5h-3z" fill="#fff"/><path d="M107 7q2 3 0 6M110 5q3 5 0 10" fill="none" stroke="#fff" stroke-width="1.200"/><path d="M127 2l-6 11 3 4 6-10z" fill="#1fa463"/><path d="M127 2h5l6 11h-5z" fill="#ffd04b"/><path d="M127 12h11l-3 5h-11z" fill="#4688f4"/>', 'w-[140px] h-[18px] ml-[37px]', '0 0 140 18')
  + `<div class="flex flex-col items-center w-[60px] gap-[5px] ml-[14px] mr-[11px]">${tx('10:27', 27)}${tx('01-02-2016', 58)}</div><div class="w-[14px] h-[38px] border border-[#7d9cbc] bg-linear-to-b from-white/25 to-transparent"></div></div>`;

// Each label has a fixed width; its text is condensed or widened to fill it
const labels = [...document.querySelectorAll('[data-w]')];
labels.forEach(e => {
  e.classList.add('block', 'shrink-0', 'whitespace-pre');
  e.style.width = e.dataset.w + 'px';
  e.innerHTML = `<span class="inline-block origin-left whitespace-pre">${e.textContent}</span>`;
});
const fit = () => labels.forEach(e => {
  const s = e.firstChild;
  s.style.transform = `scaleX(${(e.dataset.w / s.offsetWidth).toFixed(4)})`;
});
fit();
addEventListener('load', fit);
document.fonts.ready.then(fit);
requestAnimationFrame(() => requestAnimationFrame(fit));
</script>
</body>
</html>
